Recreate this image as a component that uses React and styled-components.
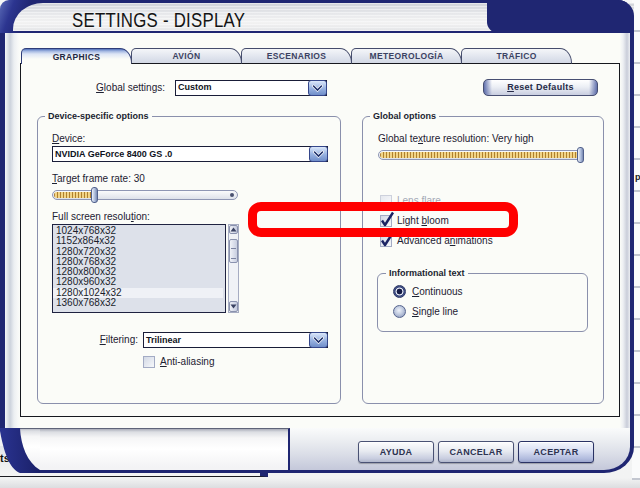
import React from "react";
import styled, { createGlobalStyle, css } from "styled-components";

const NAVY = "#1f2672";
const FONT = `"Liberation Sans", Arial, sans-serif`;

const GlobalStyle = createGlobalStyle`
  html, body { margin: 0; padding: 0; }
  body { width: 640px; height: 488px; overflow: hidden; font-family: ${FONT}; }
  * { box-sizing: border-box; }
`;

const Screen = styled.div`
  position: relative;
  width: 640px;
  height: 488px;
  overflow: hidden;
  background: linear-gradient(#f6f7f7 0, #f2f3f3 478px, #dcdde0 488px);
`;

const SideWindow = styled.div`
  position: absolute;
  left: 632px;
  top: 0;
  width: 8px;
  height: 480px;
  padding: 172px 0 0 3px;
  background: repeating-linear-gradient(180deg, rgba(0, 0, 0, 0) 0 30px, #c3c7d0 30px 32px), #fafbfb;
  font: bold 9px/10px ${FONT};
  color: #222;
`;

const BackWindow = styled.div`
  position: absolute;
  left: 0;
  top: 446px;
  width: 268px;
  height: 31px;
  padding-top: 6px;
  border-bottom: 1px solid #1c1c22;
  border-right: 8px solid ${NAVY};
  background: linear-gradient(#e4e6ea, #f4f4f4);
  font: bold 11px/13px ${FONT};
  color: #111;
`;

const Dialog = styled.div`
  position: absolute;
  left: 0;
  top: 0;
  z-index: 1;
  width: 634px;
  height: 473px;
  display: flex;
  flex-direction: column;
`;

const TitleRow = styled.div`
  height: 33px;
  flex-shrink: 0;
  display: flex;
  padding: 3px 0 2px 13px;
  background: linear-gradient(110deg, #5a6ab6 0, #2c3590 14px, ${NAVY} 30px);
  border-radius: 9px 16px 0 0;
`;

const TitleBar = styled.div`
  flex: 1;
  display: flex;
  align-items: flex-start;
  border-top-left-radius: 30px 26px;
  background: repeating-linear-gradient(180deg, rgba(255, 255, 255, 0.45) 0 1px, rgba(255, 255, 255, 0) 1px 3px),
    linear-gradient(#cfd2d8, #e8e9ec 40%, #f2f2f2 70%, #e4e5e8);
`;

const TitleText = styled.h1`
  margin: 7px 0 0 59px;
  font: 400 20px/20px ${FONT};
  color: #141414;
  letter-spacing: 0.3px;
  white-space: nowrap;
  transform: scaleX(0.84);
  transform-origin: left center;
`;

const TitleCap = styled.div`
  flex-shrink: 0;
  margin: -3px 0 0 auto;
  width: 147px;
  height: 33px;
  background: ${NAVY};
  border-radius: 0 16px 0 11px;
`;

const Body = styled.div`
  height: 395px;
  flex-shrink: 0;
  display: flex;
  flex-direction: column;
  padding: 15px 10px 11px 15px;
  border-left: 5px solid ${NAVY};
  border-right: 4px solid ${NAVY};
  background: linear-gradient(
    90deg,
    #f4f6f7 0,
    #ccd2dc 5px,
    #eceff2 9px,
    #f8f9f8 13px,
    #fbfcf8 15px,
    #fbfcf8 calc(100% - 10px),
    #eef0f3 calc(100% - 7px),
    #c9cdd9 calc(100% - 3px),
    #eceef2 100%
  );
`;

const TabRow = styled.div`
  display: flex;
  align-items: flex-end;
  height: 16px;
  margin: 0 0 -1px 1px;
  position: relative;
  z-index: 2;
`;

const Tab = styled.div`
  width: 111px;
  height: 16px;
  margin-right: -1px;
  display: flex;
  align-items: center;
  justify-content: center;
  padding-top: 1px;
  font: bold 8.5px/1 ${FONT};
  color: #3b4262;
  letter-spacing: 0.35px;
  border: 1px solid #454c6c;
  border-bottom-color: #16181e;
  border-radius: 5px 12px 0 0 / 5px 15px 0 0;
  background: linear-gradient(#f4f6f9, #e1e5ee 55%, #d2d8e5);
  ${(p) =>
    p.$active &&
    css`
      border-color: #2e3c78;
      border-bottom: 0;
      background: linear-gradient(#4f6fb8 0, #9fb4e0 2px, #dde5f5 5px, #fbfcf8 10px);
      color: #222842;
    `}
`;

const Panel = styled.div`
  flex: 1;
  position: relative;
  z-index: 1;
  display: flex;
  flex-direction: column;
  border: 1px solid #16181e;
  background: #fbfcf8;
  padding: 15px 15px 12px 16px;
`;

const TopRow = styled.div`
  display: flex;
  align-items: center;
  height: 17px;
  flex-shrink: 0;
`;

const RowLabel = styled.label`
  flex-shrink: 0;
  width: ${(p) => p.$w}px;
  margin-right: ${(p) => p.$gap}px;
  text-align: right;
  font: 10px/12px ${FONT};
  color: #1d2132;
`;

const Key = styled.span`
  text-decoration: underline;
`;

const SelectBox = styled.div`
  display: flex;
  align-items: center;
  flex-shrink: 0;
  height: 16px;
  width: ${(p) => (p.$w ? `${p.$w}px` : "auto")};
  ${(p) =>
    p.$grow &&
    css`
      flex: 1;
    `}
  margin-top: ${(p) => p.$mt || 0}px;
  border: 1px solid #191d38;
  background: #fff;
  padding-left: 2px;
  font: bold 9px/1 ${FONT};
  color: #101322;
`;

const ArrowBtn = styled.span`
  margin: -1px -1px -1px auto;
  width: 19px;
  height: 16px;
  display: flex;
  align-items: center;
  justify-content: center;
  border: 1px solid #34468a;
  border-radius: 3px;
  background: linear-gradient(#dce8fb, #9bb5e2 50%, #6f8dc9);
`;

const ResetBtn = styled.button`
  margin-left: auto;
  margin-right: 6px;
  width: 115px;
  height: 17px;
  padding: 0;
  border: 1px solid #474f72;
  border-radius: 5px;
  background: linear-gradient(
      90deg,
      rgba(52, 72, 150, 0.75) 0,
      rgba(52, 72, 150, 0) 8px,
      rgba(52, 72, 150, 0) calc(100% - 8px),
      rgba(52, 72, 150, 0.75) 100%
    ),
    linear-gradient(#ffffff, #eceff5 45%, #c9cee0);
  font: bold 9px/1 ${FONT};
  color: #262b48;
  letter-spacing: 0.3px;
`;

const GroupsRow = styled.div`
  flex: 1;
  display: flex;
  gap: 21px;
  margin-top: 20px;
`;

const Group = styled.div`
  position: relative;
  flex: ${(p) => (p.$w ? "none" : "1")};
  width: ${(p) => (p.$w ? `${p.$w}px` : "auto")};
  height: ${(p) => (p.$h ? `${p.$h}px` : "auto")};
  margin: ${(p) => p.$m || "0"};
  display: flex;
  flex-direction: column;
  padding: ${(p) => p.$pad};
  border: 1px solid #8a90ac;
  border-radius: 6px;
`;

const Legend = styled.span`
  position: absolute;
  top: -6px;
  left: ${(p) => p.$left || 7}px;
  padding: 0 3px;
  background: #fbfcf8;
  font: bold 9px/11px ${FONT};
  color: #1a1e30;
  white-space: nowrap;
`;

const Label = styled.div`
  font: 10px/12px ${FONT};
  color: #1d2132;
  margin-top: ${(p) => p.$mt || 0}px;
  white-space: nowrap;
`;

const SliderWrap = styled.div`
  position: relative;
  flex-shrink: 0;
  width: ${(p) => p.$w}px;
  height: 16px;
  margin-top: ${(p) => p.$mt || 2}px;
  display: flex;
  align-items: center;
`;

const Track = styled.div`
  flex: 1;
  height: 10px;
  padding: 1px;
  display: flex;
  border: 1px solid #8e96b4;
  border-radius: 5px;
  background: linear-gradient(#fafbfc, #dde1ea);
`;

const Fill = styled.div`
  border-radius: 4px 0 0 4px;
  background: repeating-linear-gradient(90deg, #b0802e 0 1px, #f1d487 1px 3px);
`;

const Thumb = styled.div`
  position: absolute;
  top: 0;
  width: 7px;
  height: 16px;
  border: 1px solid #50608c;
  border-radius: 3px;
  background: linear-gradient(90deg, #eef2fa, #a8b8d8 60%, #7888b0);
`;

const EndDot = styled.div`
  position: absolute;
  right: 4px;
  top: 6px;
  width: 4px;
  height: 4px;
  border-radius: 50%;
  background: #4a5270;
`;

const ListRow = styled.div`
  display: flex;
  gap: 2px;
  height: 89px;
  margin-top: 1px;
  flex-shrink: 0;
`;

const ListBox = styled.div`
  width: 174px;
  padding: 1px 2px 0 0;
  overflow: hidden;
  border: 1px solid #1e2240;
  background: #dde1ea;
`;

const ListItem = styled.div`
  height: 10.3px;
  padding-left: 3px;
  font: 10px/10.3px ${FONT};
  color: #1a1e2c;
  ${(p) =>
    p.$sel &&
    css`
      background: #eff1f6;
    `}
`;

const ScrollBar = styled.div`
  width: 11px;
  display: flex;
  flex-direction: column;
  border: 1px solid #a6acc2;
  background: #f0f2f6;
`;

const ScrollBtn = styled.div`
  height: ${(p) => p.$h}px;
  margin-top: ${(p) => (p.$down ? "auto" : "0")};
  display: flex;
  align-items: center;
  justify-content: center;
  background: linear-gradient(90deg, #eef0f6, #c4cade);
  border: 1px solid #8a92ae;
  border-radius: 2px;
`;

const ScrollThumb = styled.div`
  margin-top: 5px;
  height: 24px;
  border: 1px solid #8a92ae;
  border-radius: 2px;
  background: repeating-linear-gradient(180deg, rgba(0, 0, 0, 0) 0 8px, #7c84a2 8px 9px, rgba(0, 0, 0, 0) 9px 10px) center / 5px 100% no-repeat,
    linear-gradient(90deg, #f0f2f8, #c8cee0);
`;

const FieldRow = styled.div`
  display: flex;
  align-items: center;
  height: 16px;
  margin-top: ${(p) => p.$mt}px;
  flex-shrink: 0;
`;

const CheckList = styled.div`
  display: flex;
  flex-direction: column;
  gap: 8px;
  margin-top: ${(p) => p.$mt || 0}px;
  padding-left: ${(p) => p.$pl || 0}px;
`;

const CheckRow = styled.div`
  display: flex;
  align-items: center;
  gap: 5px;
  height: 12px;
  font: 10px/12px ${FONT};
  color: ${(p) => (p.$disabled ? "#a4a9b6" : "#1d2132")};
`;

const CheckBox = styled.span`
  position: relative;
  flex-shrink: 0;
  width: 12px;
  height: 12px;
  border: 1px solid ${(p) => (p.$disabled ? "#cdd1dc" : "#a3abc4")};
  background: ${(p) =>
    p.$disabled ? "linear-gradient(135deg, #e6e9ef, #f8f9fb)" : "linear-gradient(135deg, #d3d9e5, #f6f8fb)"};
`;

const CheckMark = styled.svg`
  position: absolute;
  left: -1px;
  top: -5px;
  overflow: visible;
`;

const RadioList = styled.div`
  display: flex;
  flex-direction: column;
  gap: 7px;
`;

const RadioRow = styled.div`
  display: flex;
  align-items: center;
  gap: 6px;
  height: 13px;
  font: 10px/12px ${FONT};
  color: #1d2132;
`;

const RadioDot = styled.span`
  flex-shrink: 0;
  width: 13px;
  height: 13px;
  border-radius: 50%;
  border: 1px solid #56648e;
  background: radial-gradient(circle at 45% 40%, #eef2fa 0, #c0cadf 45%, #7d8cb2 100%);
  ${(p) =>
    p.$on &&
    css`
      border-color: #2a3562;
      background: radial-gradient(circle, #151b45 0 2.6px, #e3e8f3 3.2px 3.6px, #34427a 4.4px, #7a8ab4 100%);
    `}
`;

const Footer = styled.div`
  display: flex;
  height: 45px;
  flex-shrink: 0;
`;

const Swoosh = styled.svg`
  flex-shrink: 0;
  display: block;
`;

const Tray = styled.div`
  width: 250px;
  border-top: 1px solid #5f6478;
  border-bottom: 3px solid ${NAVY};
  border-right: 2px solid ${NAVY};
  background: linear-gradient(#a9acb8 0, #dcdee3 3px, #f6f6f7 9px, #ffffff 20px, #f3f3f5 38px);
`;

const ButtonBar = styled.div`
  flex: 1;
  display: flex;
  justify-content: flex-end;
  align-items: flex-start;
  gap: 4px;
  padding: 13px 36px 0 0;
  border-bottom: 3px solid ${NAVY};
  border-right: 4px solid ${NAVY};
  border-bottom-right-radius: 30px 26px;
  background: linear-gradient(#fafbfb 0, #eef0f3 25%, #dcdfe8 60%, #c4c8da 100%);
`;

const FooterBtn = styled.button`
  width: 76px;
  height: 22px;
  padding: 0;
  border: 1px solid ${(p) => (p.$primary ? "#2a3264" : "#4a5274")};
  border-radius: 3px;
  background: ${(p) =>
    p.$primary
      ? "linear-gradient(#f4f6fc, #d8def2 45%, #b0badd 85%, #9ca6cc)"
      : "linear-gradient(#fdfdfe, #e8ebf1 45%, #c9cee0 82%, #b2b8cc)"};
  box-shadow: inset 0 1px 0 #fff, 0 1px 1px rgba(0, 0, 0, 0.25);
  font: bold 9px/1 ${FONT};
  color: #2c3250;
  letter-spacing: 0.3px;
`;

const Annotation = styled.div`
  position: absolute;
  left: 248px;
  top: 202px;
  z-index: 5;
  width: 270px;
  height: 35px;
  border: 9px solid #ff0000;
  border-radius: 13px;
  pointer-events: none;
`;

const Chevron = () => (
  <svg width="11" height="8" viewBox="0 0 11 8">
    <polyline points="1.5,2 5.5,6 9.5,2" fill="none" stroke="#ffffff" strokeWidth="3" strokeLinecap="round" />
    <polyline points="1.5,2 5.5,6 9.5,2" fill="none" stroke="#1d2f6a" strokeWidth="1.6" strokeLinecap="round" />
  </svg>
);

const Select = ({ children, w, mt, grow }) => (
  <SelectBox $w={w} $mt={mt} $grow={grow}>
    {children}
    <ArrowBtn>
      <Chevron />
    </ArrowBtn>
  </SelectBox>
);

const Slider = ({ w, value, mt, endDot }) => {
  const thumbLeft = Math.round((w - 7) * value);
  return (
    <SliderWrap $w={w} $mt={mt}>
      <Track>
        <Fill style={{ width: `${Math.max(thumbLeft - 1, 0)}px` }} />
      </Track>
      {endDot && <EndDot />}
      <Thumb style={{ left: `${thumbLeft}px` }} />
    </SliderWrap>
  );
};

const Check = ({ checked, disabled, children }) => (
  <CheckRow $disabled={disabled}>
    <CheckBox $disabled={disabled}>
      {checked && (
        <CheckMark width="14" height="16" viewBox="0 0 14 16">
          <path d="M2 9.5 L5 14 L13 1.5" fill="none" stroke="#1b2363" strokeWidth="2.4" strokeLinejoin="round" />
        </CheckMark>
      )}
    </CheckBox>
    <span>{children}</span>
  </CheckRow>
);

const Radio = ({ on, children }) => (
  <RadioRow>
    <RadioDot $on={on} />
    <span>{children}</span>
  </RadioRow>
);

const resolutions = [
  "1024x768x32",
  "1152x864x32",
  "1280x720x32",
  "1280x768x32",
  "1280x800x32",
  "1280x960x32",
  "1280x1024x32",
  "1360x768x32",
];

const tabs = ["GRAPHICS", "AVIÓN", "ESCENARIOS", "METEOROLOGÍA", "TRÁFICO"];

export default function App() {
  return (
    <>
      <GlobalStyle />
      <Screen>
        <SideWindow>p</SideWindow>
        <BackWindow>ts</BackWindow>
        <Dialog>
          <TitleRow>
            <TitleBar>
              <TitleText>SETTINGS - DISPLAY</TitleText>
              <TitleCap />
            </TitleBar>
          </TitleRow>
          <Body>
            <TabRow>
              {tabs.map((t, i) => (
                <Tab key={t} $active={i === 0}>
                  {t}
                </Tab>
              ))}
            </TabRow>
            <Panel>
              <TopRow>
                <RowLabel $w={128} $gap={10}>
                  <Key>G</Key>lobal settings:
                </RowLabel>
                <Select w={152}>Custom</Select>
                <ResetBtn>
                  <Key>R</Key>eset Defaults
                </ResetBtn>
              </TopRow>
              <GroupsRow>
                <Group $w={304} $pad="16px 12px 0 14px">
                  <Legend>Device-specific options</Legend>
                  <Label>
                    <Key>D</Key>evice:
                  </Label>
                  <Select mt={1}>NVIDIA GeForce 8400 GS .0</Select>
                  <Label $mt={11}>
                    <Key>T</Key>arget frame rate: 30
                  </Label>
                  <Slider w={186} value={0.22} mt={2} endDot />
                  <Label $mt={8}>
                    Full screen resolu<Key>t</Key>ion:
                  </Label>
                  <ListRow>
                    <ListBox>
                      {resolutions.map((r, i) => (
                        <ListItem key={r} $sel={i === 6}>
                          {r}
                        </ListItem>
                      ))}
                    </ListBox>
                    <ScrollBar>
                      <ScrollBtn $h={9}>
                        <svg width="7" height="5" viewBox="0 0 7 5">
                          <polygon points="0.5,4.5 3.5,0.5 6.5,4.5" fill="#3a4262" />
                        </svg>
                      </ScrollBtn>
                      <ScrollThumb />
                      <ScrollBtn $h={11} $down>
                        <svg width="7" height="5" viewBox="0 0 7 5">
                          <polygon points="0.5,0.5 6.5,0.5 3.5,4.5" fill="#3a4262" />
                        </svg>
                      </ScrollBtn>
                    </ScrollBar>
                  </ListRow>
                  <FieldRow $mt={19}>
                    <RowLabel $w={86} $gap={5}>
                      <Key>F</Key>iltering:
                    </RowLabel>
                    <Select grow>Trilinear</Select>
                  </FieldRow>
                  <CheckList $mt={8} $pl={91}>
                    <Check>
                      <Key>A</Key>nti-aliasing
                    </Check>
                  </CheckList>
                </Group>
                <Group $pad="16px 0 0 15px">
                  <Legend>Global options</Legend>
                  <Label>
                    Global te<Key>x</Key>ture resolution: Very high
                  </Label>
                  <Slider w={206} value={1} mt={2} />
                  <CheckList $mt={32} $pl={2}>
                    <Check disabled>Lens flare</Check>
                    <Check checked>
                      Light <Key>b</Key>loom
                    </Check>
                    <Check checked>
                      Advanced a<Key>n</Key>imations
                    </Check>
                  </CheckList>
                  <Group $w={211} $h={59} $m="26px 0 0 -1px" $pad="11px 0 0 15px">
                    <Legend $left={8}>Informational text</Legend>
                    <RadioList>
                      <Radio on>
                        <Key>C</Key>ontinuous
                      </Radio>
                      <Radio>
                        <Key>S</Key>ingle line
                      </Radio>
                    </RadioList>
                  </Group>
                </Group>
              </GroupsRow>
            </Panel>
          </Body>
          <Footer>
            <Swoosh width="40" height="45" viewBox="0 0 40 45">
              <defs>
                <linearGradient id="trayFill" x1="0" y1="0" x2="0" y2="1">
                  <stop offset="0" stopColor="#a9acb8" />
                  <stop offset="0.07" stopColor="#dcdee3" />
                  <stop offset="0.2" stopColor="#f6f6f7" />
                  <stop offset="0.45" stopColor="#ffffff" />
                  <stop offset="0.85" stopColor="#f3f3f5" />
                </linearGradient>
                <linearGradient id="bandFill" x1="0" y1="0" x2="1" y2="0">
                  <stop offset="0" stopColor="#2a3390" />
                  <stop offset="1" stopColor="#1a2068" />
                </linearGradient>
              </defs>
              <path d="M20 0 H40 V42 C27 34 21 18 20 0 Z" fill="url(#trayFill)" />
              <rect x="20" y="0" width="20" height="1" fill="#5f6478" />
              <path d="M0 0 H20 C21 18 27 34 40 42 V45 H20 C11 41 5 30 0 3 Z" fill="url(#bandFill)" />
            </Swoosh>
            <Tray />
            <ButtonBar>
              <FooterBtn>AYUDA</FooterBtn>
              <FooterBtn>CANCELAR</FooterBtn>
              <FooterBtn $primary>ACEPTAR</FooterBtn>
            </ButtonBar>
          </Footer>
        </Dialog>
        <Annotation />
      </Screen>
    </>
  );
}
